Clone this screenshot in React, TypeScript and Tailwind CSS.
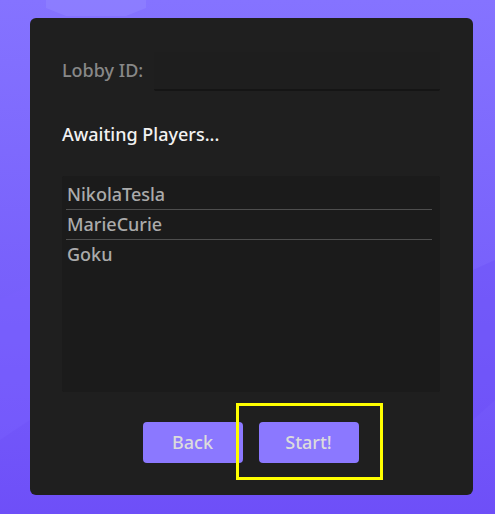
import React from "react";

const players = ["NikolaTesla", "MarieCurie", "Goku"];

export default function App() {
  return (
    <div
      className="relative w-[495px] h-[514px] overflow-hidden bg-gradient-to-b from-[#8573ff] to-[#6e4ff8]"
      style={{ fontFamily: '"Noto Sans", "Open Sans", sans-serif' }}
    >
      <svg className="absolute inset-0" width="495" height="514" viewBox="0 0 495 514">
        <polygon points="46,-10 146,-10 146,8 126,16 66,16 46,8" fill="#9183ff" opacity="0.6" />
        <polygon points="0,300 30,285 30,420 0,440" fill="#7a60ff" opacity="0.35" />
        <polygon points="473,270 495,260 495,400 473,420" fill="#6a4cf5" opacity="0.35" />
      </svg>
      <div className="relative pt-[18px] pl-[30px] flex">
        <div className="w-[443px] h-[477px] rounded-[6px] bg-[#1f1f1f] pl-[32px] pr-[33px] pt-[34px] flex flex-col">
          <div className="flex items-center h-[39px]">
            <span className="text-[18px] font-medium text-[#888888] leading-none w-[92px] -mt-[3px]">Lobby ID:</span>
            <div className="flex-1 h-[39px] bg-[#1e1e1e] border-b-2 border-[#151515] rounded-b-[2px]" />
          </div>
          <div className="mt-[31px] text-[18px] font-medium text-[#f2f2f2] leading-[24px]">Awaiting Players...</div>
          <div className="mt-[30px] h-[216px] bg-[#1b1b1b] rounded-[2px] pl-[4px] pr-[8px] pt-[4px]">
            {players.map((p, i) => (
              <div
                key={p}
                className={
                  i < players.length - 1
                    ? "h-[30px] border-b border-[#4e4e4e] text-[18px] font-medium text-[#ababab] leading-[29px] pl-[1px]"
                    : "h-[30px] text-[18px] font-medium text-[#ababab] leading-[29px] pl-[1px]"
                }
              >
                {p}
              </div>
            ))}
          </div>
          <div className="mt-[30px] flex justify-center gap-[16px] pr-[1px]">
            <button className="w-[100px] h-[41px] rounded-[4px] bg-[#8b78ff] text-[18px] font-medium text-[#dcdcdc]">
              Back
            </button>
            <button className="w-[100px] h-[41px] rounded-[4px] bg-[#8b78ff] text-[18px] font-medium text-[#dcdcdc]">
              Start!
            </button>
          </div>
        </div>
      </div>
      <div className="absolute left-[236px] top-[403px] w-[147px] h-[77px] border-[3px] border-[#ffff00]" />
    </div>
  );
}
